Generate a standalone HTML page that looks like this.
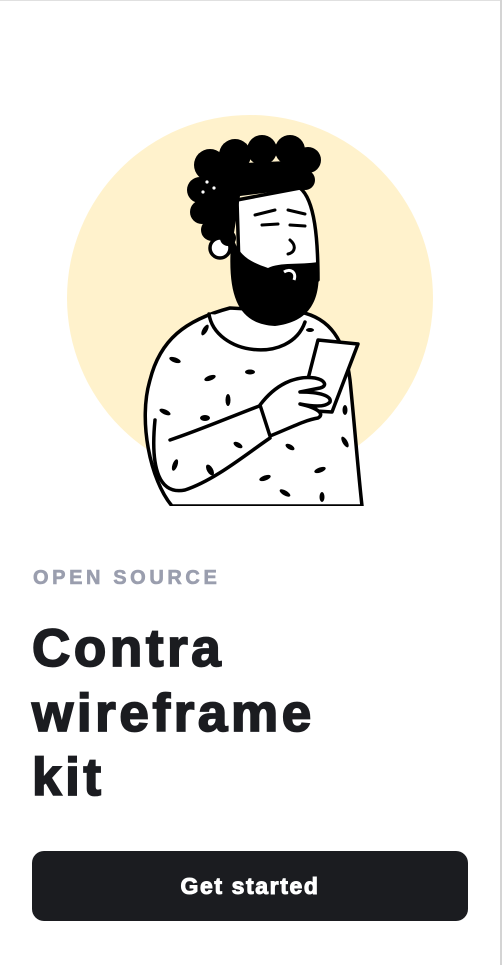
<!DOCTYPE html>
<html><head><meta charset="utf-8"><style>
html,body{margin:0;padding:0;background:#fff}
body{width:502px;height:965px;position:relative;overflow:hidden;font-family:"Liberation Sans",sans-serif}
.edge{position:absolute;right:0;top:0;width:2px;height:965px;background:#d4d4d4}
.edget{position:absolute;left:0;top:0;width:502px;height:1px;background:#e0e0e0}
.tag{position:absolute;left:33px;top:567px;font-size:20px;font-weight:700;color:#9a9eae;letter-spacing:3.6px;-webkit-text-stroke:0.6px #9a9eae}
h1{position:absolute;left:32px;top:617px;margin:0;font-size:53px;line-height:64.5px;font-weight:900;color:#1b1c20;letter-spacing:3.6px;-webkit-text-stroke:1.8px #1b1c20}
.btn{position:absolute;left:32px;top:851px;width:436px;height:70px;border-radius:12px;background:#1b1c20;color:#fff;font-weight:900;font-size:23px;text-align:center;line-height:70px;letter-spacing:1.6px;-webkit-text-stroke:1px #fff}
svg{position:absolute;left:0;top:0}
</style></head><body>
<div class="edget"></div><div class="edge"></div>
<svg width="502" height="520" viewBox="0 0 502 520">
<defs><clipPath id="c"><rect x="0" y="0" width="502" height="506"/></clipPath></defs>
<circle cx="250" cy="298" r="183" fill="#fff2cc"/>
<g clip-path="url(#c)" stroke="#000" stroke-width="3.5" stroke-linecap="round" stroke-linejoin="round">
<path d="M172 506 C150 480 138 420 150 380 C160 340 185 320 230 308 L300 312 C330 318 345 340 350 380 C355 430 358 470 362 506 Z" fill="#fff"/>
<path d="M209 314 C215 355 290 365 305 322" fill="#fff"/>
<path d="M155 420 C150 470 160 495 185 490 C215 480 245 455 270 438" fill="none"/>
<path d="M170 440 C200 430 235 415 262 405" fill="none"/>
<path d="M318 340 L358 344 L332 412 L300 410 Z" fill="#fff"/>
<path d="M260 405 C275 385 295 375 315 378 C325 380 328 386 320 388 L300 392 C320 392 332 396 330 402 C325 408 310 406 300 404 C318 408 325 414 318 418 C305 420 290 428 270 436 Z" fill="#fff"/>
<path d="M237 200 L300 188 C315 200 318 240 318 280 L240 300 Z" fill="#fff"/>
<circle cx="220" cy="248" r="10" fill="#fff"/>
</g>
<g fill="#000">
<circle cx="210" cy="165" r="16"/><circle cx="235" cy="155" r="16"/><circle cx="262" cy="150" r="15"/><circle cx="290" cy="150" r="15"/><circle cx="308" cy="160" r="13"/><circle cx="305" cy="180" r="10"/>
<circle cx="200" cy="190" r="13"/><circle cx="202" cy="212" r="12"/><circle cx="212" cy="230" r="11"/><circle cx="228" cy="238" r="8"/>
<path d="M200 165 L310 160 L305 188 L240 196 L232 245 L205 230 Z"/>
<path d="M232 232 C236 255 250 262 268 268 C280 262 300 265 318 262 C322 300 310 322 275 326 C240 324 225 300 232 232 Z"/>
</g>
<g stroke="#000" stroke-width="3" fill="none" stroke-linecap="round">
<path d="M255 215 L275 210 M288 210 L305 214 M262 225 L278 224 M290 225 L305 226"/>
<path d="M290 240 C296 245 296 252 288 254"/>
</g>
<path d="M284 272 C290 268 297 272 294 280" stroke="#fff" stroke-width="3" fill="none"/>
<g fill="#fff"><circle cx="207" cy="182" r="1.6"/><circle cx="203" cy="192" r="1.6"/><circle cx="214" cy="188" r="1.6"/></g>
<g fill="#000">
<ellipse cx="205" cy="330" rx="2.5" ry="6" transform="rotate(30 205 330)"/>
<ellipse cx="175" cy="360" rx="6" ry="2.5" transform="rotate(20 175 360)"/>
<ellipse cx="210" cy="378" rx="6" ry="2.5" transform="rotate(-20 210 378)"/>
<ellipse cx="250" cy="372" rx="5" ry="2.5"/>
<ellipse cx="228" cy="400" rx="2.5" ry="6"/>
<ellipse cx="165" cy="412" rx="6" ry="2.5" transform="rotate(25 165 412)"/>
<ellipse cx="205" cy="418" rx="5" ry="3"/>
<ellipse cx="238" cy="445" rx="5" ry="2.5" transform="rotate(30 238 445)"/>
<ellipse cx="175" cy="465" rx="2.5" ry="6" transform="rotate(20 175 465)"/>
<ellipse cx="210" cy="470" rx="3" ry="6" transform="rotate(-30 210 470)"/>
<ellipse cx="265" cy="478" rx="6" ry="2.5" transform="rotate(-20 265 478)"/>
<ellipse cx="285" cy="493" rx="6" ry="2.5" transform="rotate(30 285 493)"/>
<ellipse cx="320" cy="470" rx="6" ry="2.5" transform="rotate(-20 320 470)"/>
<ellipse cx="345" cy="442" rx="2.5" ry="6" transform="rotate(-30 345 442)"/>
<ellipse cx="322" cy="497" rx="2.5" ry="5"/>
<ellipse cx="290" cy="447" rx="5" ry="2.5" transform="rotate(30 290 447)"/>
<ellipse cx="310" cy="330" rx="4" ry="2"/>
<ellipse cx="345" cy="410" rx="2.5" ry="5"/>
</g>
</svg>
<div class="tag">OPEN SOURCE</div>
<h1>Contra<br>wireframe<br>kit</h1>
<div class="btn">Get started</div>
</body></html>
